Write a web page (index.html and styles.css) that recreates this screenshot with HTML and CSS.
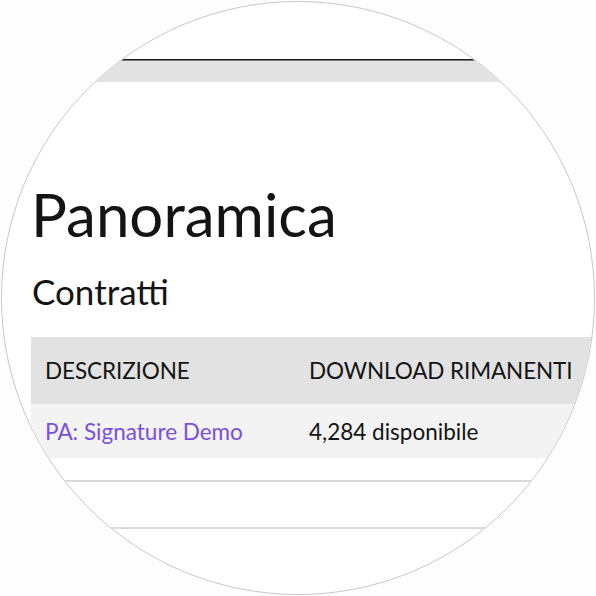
FILE: index.html
```html
<!DOCTYPE html>
<html lang="it">
<head>
<meta charset="utf-8">
<title>Panoramica</title>
<link rel="stylesheet" href="styles.css">
</head>
<body>
<div class="lens">
  <div class="topbar"></div>
  <main class="content">
    <h1 class="title">Panoramica</h1>
    <h2 class="subtitle">Contratti</h2>
    <table class="contracts">
      <thead>
        <tr><th class="col-desc">DESCRIZIONE</th><th>DOWNLOAD RIMANENTI</th></tr>
      </thead>
      <tbody>
        <tr><td class="col-desc"><a href="#" class="link">PA: Signature Demo</a></td><td>4,284 disponibile</td></tr>
      </tbody>
    </table>
  </main>
  <div class="rule rule-first"></div>
  <div class="rule rule-second"></div>
</div>
</body>
</html>
```
FILE: styles.css
```css
html, body {
  margin: 0;
  padding: 0;
  background: #fdfdfd;
}
body {
  width: 596px;
  height: 596px;
  overflow: hidden;
  font-family: Lato, "Open Sans", sans-serif;
  color: #141414;
}
.lens {
  box-sizing: border-box;
  width: 594px;
  height: 594px;
  margin: 1px 0 0 1px;
  border: 1px solid #c8c8c8;
  border-radius: 50%;
  overflow: hidden;
  background: #ffffff;
  padding-top: 57px;
}
.topbar {
  height: 22px;
  border-top: 1px solid #1a1a1a;
  background: #e2e2e2;
  box-shadow: inset 0 1px 0 #7a7a7a;
}
.content {
  padding: 0 0 0 29px;
}
.title {
  margin: 96px 0 0 0;
  font-size: 60px;
  font-weight: 400;
  line-height: 72px;
}
.subtitle {
  margin: 20px 0 0 1px;
  font-size: 35px;
  font-weight: 400;
  line-height: 42px;
}
.contracts {
  margin-top: 25px;
  border-collapse: collapse;
  width: 620px;
}
.contracts th, .contracts td {
  text-align: left;
  font-weight: 400;
  padding: 0 14px;
  line-height: 1.2;
  vertical-align: middle;
}
.contracts th {
  background: #e2e2e2;
  height: 67px;
  font-size: 22.5px;
  letter-spacing: -0.1px;
}
.contracts td {
  background: #f3f3f3;
  height: 54px;
  font-size: 22.5px;
  padding-top: 1px;
  box-sizing: border-box;
}
.col-desc {
  width: 236px;
}
.link {
  color: #7a4fe0;
  text-decoration: none;
}
.rule {
  height: 0;
  border-top: 2px solid #d9d9d9;
}
.rule-first {
  margin-top: 22px;
}
.rule-second {
  margin-top: 45px;
}
```
